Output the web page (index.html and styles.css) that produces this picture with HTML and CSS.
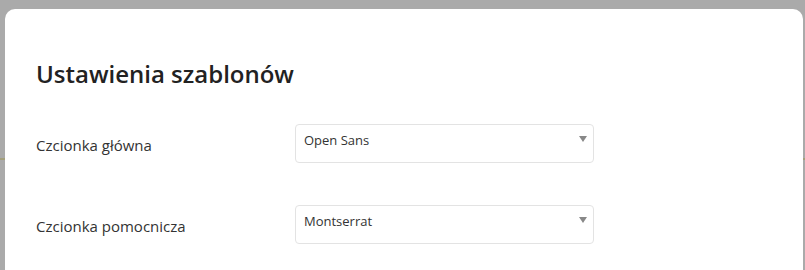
FILE: index.html
```html
<!doctype html>
<html lang="pl">
<head>
  <meta charset="UTF-8">
  <title>Ustawienia szablonów</title>
  <link rel="stylesheet" href="styles.css">
</head>
<body>

  <div class="modal">
    <h1>Ustawienia szablonów</h1>

    <div class="row">
      <label class="label">Czcionka główna</label>
      <div class="select">
        <span>Open Sans</span>
        <span class="arrow"></span>
      </div>
    </div>

    <div class="row">
      <label class="label">Czcionka pomocnicza</label>
      <div class="select">
        <span>Montserrat</span>
        <span class="arrow"></span>
      </div>
    </div>
  </div>

</body>
</html>
```

FILE: styles.css
```css
body {
  margin: 0;
  height: 270px;
  overflow: hidden;
  font-family: "Open Sans", "Noto Sans", sans-serif;
  color: #333;
  background: linear-gradient(to bottom, #aaa 158px, #a39f7c 158px, #a39f7c 160px, #aaa 160px);
}
.modal {
  margin: 9px 2px 0 5px;
  height: 261px;
  background: #fff;
  border-radius: 10px 10px 0 0;
  padding: 0 31px;
}
h1 {
  margin: 0;
  padding-top: 45px;
  font-size: 24px;
  font-weight: 600;
  color: #222;
  line-height: 40px;
}
.row {
  display: flex;
  align-items: center;
  height: 40px;
}
.row:first-of-type {
  margin-top: 29px;
}
.row + .row {
  margin-top: 41px;
}
.label {
  width: 259px;
  font-size: 15px;
  padding-top: 4px;
}
.select {
  box-sizing: border-box;
  width: 299px;
  height: 39px;
  border: 1px solid #e3e3e3;
  border-radius: 4px;
  padding: 6px 6px 0 8px;
  font-size: 13px;
  display: flex;
  justify-content: space-between;
  align-items: flex-start;
}
.arrow {
  margin-top: 5px;
  border-left: 4px solid transparent;
  border-right: 4px solid transparent;
  border-top: 6px solid #888;
}
```
